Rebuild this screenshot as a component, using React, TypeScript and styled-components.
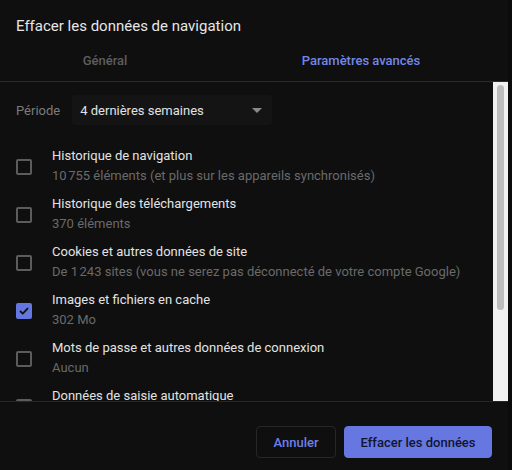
import React from "react";
import styled, { createGlobalStyle } from "styled-components";

const GlobalStyle = createGlobalStyle`
  html, body { margin: 0; padding: 0; background: #0b0b0b; }
  body { font-family: Roboto, "Liberation Sans", sans-serif; -webkit-font-smoothing: antialiased; }
  * { box-sizing: border-box; }
`;

const Dialog = styled.div`
  width: 508px;
  height: 470px;
  background: #0f0f0f;
  display: flex;
  flex-direction: column;
`;

const Title = styled.h1`
  margin: 0;
  padding: 16px 16px 0;
  height: 45px;
  font-size: 15px;
  line-height: 20px;
  font-weight: 400;
  color: #e6e6e6;
`;

const Tabs = styled.div`
  display: flex;
  height: 37px;
  padding-bottom: 6px;
  border-bottom: 1px solid #2a2a2a;
`;

const Tab = styled.div<{ $active?: boolean; $w: number }>`
  width: ${(p) => p.$w}px;
  display: flex;
  align-items: center;
  justify-content: center;
  font-size: 13px;
  font-weight: 500;
  color: ${(p) => (p.$active ? "#7387ea" : "#5e5e5e")};
`;

const Body = styled.div`
  display: flex;
  height: 320px;
  border-bottom: 1px solid #262626;
`;

const List = styled.div`
  flex: 1;
  overflow: hidden;
  padding: 13px 0 0 16px;
`;

const ScrollTrack = styled.div`
  width: 15px;
  background: #f1f1f1;
  padding: 3px 4px;
`;

const ScrollThumb = styled.div`
  width: 7px;
  height: 225px;
  border-radius: 4px;
  background: #bcbcbc;
`;

const PeriodRow = styled.div`
  display: flex;
  align-items: center;
  height: 30px;
  gap: 12px;
  margin-bottom: 17px;
`;

const PeriodLabel = styled.span`
  font-size: 13px;
  color: #7b7b7b;
`;

const Select = styled.div`
  width: 200px;
  height: 30px;
  background: #141414;
  border-radius: 4px;
  display: flex;
  align-items: center;
  justify-content: space-between;
  padding: 0 10px 0 8px;
  font-size: 13px;
  color: #e2e2e2;
`;

const Arrow = styled.span`
  width: 0;
  height: 0;
  border-left: 5px solid transparent;
  border-right: 5px solid transparent;
  border-top: 5px solid #8a8a8a;
`;

const Item = styled.div`
  display: flex;
  align-items: center;
  gap: 20px;
  height: 48px;
`;

const Box = styled.span<{ $checked?: boolean }>`
  flex: none;
  width: 16px;
  height: 16px;
  border-radius: 2px;
  border: 2px solid ${(p) => (p.$checked ? "#6477e0" : "#5c5c5c")};
  background: ${(p) => (p.$checked ? "#6477e0" : "transparent")};
  display: flex;
  align-items: center;
  justify-content: center;
  margin-top: 2px;
`;

const Texts = styled.div`
  display: flex;
  flex-direction: column;
`;

const ItemTitle = styled.span`
  font-size: 13px;
  line-height: 20px;
  color: #e3e3e3;
  white-space: nowrap;
`;

const ItemSub = styled.span`
  font-size: 13px;
  line-height: 20px;
  color: #6a6a6a;
  white-space: nowrap;
`;

const Footer = styled.div`
  flex: 1;
  display: flex;
  justify-content: flex-end;
  align-items: flex-start;
  gap: 8px;
  padding: 24px 16px 0;
`;

const Button = styled.button<{ $primary?: boolean }>`
  height: 32px;
  padding: 0 ${(p) => (p.$primary ? 15.5 : 16.5)}px;
  border-radius: 4px;
  font-family: inherit;
  font-size: 13px;
  font-weight: 500;
  border: 1px solid ${(p) => (p.$primary ? "#6677e2" : "#262626")};
  background: ${(p) => (p.$primary ? "#6677e2" : "transparent")};
  color: ${(p) => (p.$primary ? "#121530" : "#6d80e6")};
`;

const items = [
  { t: "Historique de navigation", s: "10\u202f755 éléments (et plus sur les appareils synchronisés)" },
  { t: "Historique des téléchargements", s: "370 éléments" },
  { t: "Cookies et autres données de site", s: "De 1\u202f243 sites (vous ne serez pas déconnecté de votre compte Google)" },
  { t: "Images et fichiers en cache", s: "302 Mo", c: true },
  { t: "Mots de passe et autres données de connexion", s: "Aucun" },
  { t: "Données de saisie automatique", s: "Aucune" },
  { t: "Paramètres de site", s: "Aucun" },
  { t: "Données d'applications hébergées", s: "2 applications" },
];

export default function App() {
  return (
    <>
      <GlobalStyle />
      <Dialog>
        <Title>Effacer les données de navigation</Title>
        <Tabs>
          <Tab $w={210}>Général</Tab>
          <Tab $w={46} />
          <Tab $w={210} $active>Paramètres avancés</Tab>
        </Tabs>
        <Body>
          <List>
            <PeriodRow>
              <PeriodLabel>Période</PeriodLabel>
              <Select>
                <span>4 dernières semaines</span>
                <Arrow />
              </Select>
            </PeriodRow>
            {items.map((it) => (
              <Item key={it.t}>
                <Box $checked={it.c}>
                  {it.c && (
                    <svg width="10" height="8" viewBox="0 0 10 8">
                      <path d="M1 4 L3.8 6.6 L9 1.2" fill="none" stroke="#0f0f0f" strokeWidth="1.8" />
                    </svg>
                  )}
                </Box>
                <Texts>
                  <ItemTitle>{it.t}</ItemTitle>
                  <ItemSub>{it.s}</ItemSub>
                </Texts>
              </Item>
            ))}
          </List>
          <ScrollTrack>
            <ScrollThumb />
          </ScrollTrack>
        </Body>
        <Footer>
          <Button>Annuler</Button>
          <Button $primary>Effacer les données</Button>
        </Footer>
      </Dialog>
    </>
  );
}
